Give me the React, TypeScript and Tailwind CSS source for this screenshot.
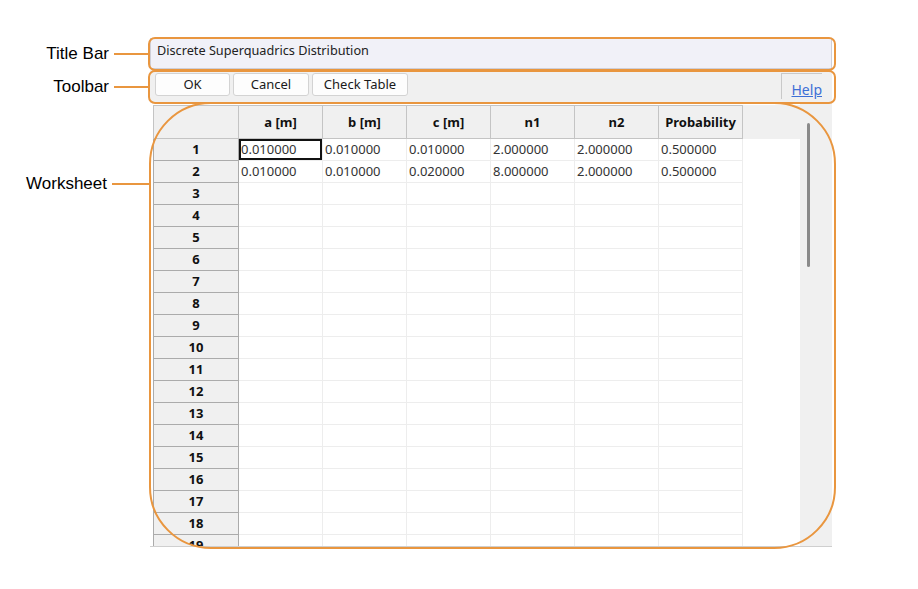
import React from 'react';

const ui = { fontFamily: '"Noto Sans", "Open Sans", sans-serif' };
const label = { fontFamily: '"Liberation Sans", Arial, sans-serif' };

const columns = ['a [m]', 'b [m]', 'c [m]', 'n1', 'n2', 'Probability'];

const data: string[][] = [
  ['0.010000', '0.010000', '0.010000', '2.000000', '2.000000', '0.500000'],
  ['0.010000', '0.010000', '0.020000', '8.000000', '2.000000', '0.500000'],
];

const rowCount = 19;

const Callout: React.FC<{ text: string; top: number; lineWidth: number }> = ({ text, top, lineWidth }) => (
  <div className="absolute right-0 flex items-center gap-[5px]" style={{ top }}>
    <span className="text-[17px] leading-none text-black" style={label}>
      {text}
    </span>
    <div className="h-[2px] bg-[#e9963f]" style={{ width: lineWidth }} />
  </div>
);

const ToolButton: React.FC<{ text: string; width: string }> = ({ text, width }) => (
  <button
    className={`${width} h-[23px] rounded-[3px] border border-[#d3d3d3] bg-[#fdfdfd] text-[13px] text-[#1a1a1a] flex items-center justify-center`}
    style={ui}
  >
    {text}
  </button>
);

const Worksheet: React.FC = () => {
  const rows = Array.from({ length: rowCount }, (_, i) => i + 1);
  return (
    <div className="flex h-[444px] border-b border-[#cfcfcf] bg-white">
      <div className="w-[650px] pl-[3px] pt-[2px] overflow-hidden" style={ui}>
        <div className="grid grid-cols-[86px_repeat(6,84px)_57px] auto-rows-[22px] [grid-template-rows:34px]">
          <div className="h-[34px] bg-[#f0f0f0] border border-[#c4c4c4]" />
          {columns.map((c) => (
            <div
              key={c}
              className="h-[34px] bg-[#f0f0f0] border-t border-r border-b border-[#c4c4c4] flex items-center justify-center pt-[1px] text-[13px] font-bold text-[#111]"
            >
              {c}
            </div>
          ))}
          <div className="h-[34px] bg-[#f0f0f0]" />
          {rows.map((r) => (
            <React.Fragment key={r}>
              <div className="h-[22px] bg-[#f0f0f0] border-l border-r border-b border-[#ababab] flex items-center justify-center pt-[1px] text-[13px] font-bold text-[#111]">
                {r}
              </div>
              {columns.map((c, ci) => {
                const v = data[r - 1]?.[ci];
                const selected = r === 1 && ci === 0;
                return (
                  <div
                    key={c}
                    className={`h-[22px] border-r border-b border-[#ededed] flex items-center pl-[2px] pt-[1px] text-[13px] text-[#333] ${
                      selected ? 'shadow-[inset_0_0_0_2px_#111]' : ''
                    }`}
                  >
                    {v}
                  </div>
                );
              })}
              <div className="h-[22px]" />
            </React.Fragment>
          ))}
        </div>
      </div>
      <div className="w-[32px] bg-[#f0f0f0] pt-[20px] pl-[7px]">
        <div className="w-[3px] h-[144px] rounded-full bg-[#8a8a8a]" />
      </div>
    </div>
  );
}

export default function App() {
  return (
    <div className="relative w-[918px] h-[589px] bg-white overflow-hidden flex">
      <div className="relative w-[150px] shrink-0">
        <Callout text="Title Bar" top={45} lineWidth={36} />
        <Callout text="Toolbar" top={78} lineWidth={36} />
        <Callout text="Worksheet" top={175} lineWidth={38} />
      </div>

      <div className="mt-[38px] w-[682px] flex flex-col">
        <div
          className="h-[31px] border border-[#cfcfd8] bg-[#f1f1f8] px-[6px] pt-[2px] text-[12.7px] text-[#222]"
          style={ui}
        >
          Discrete Superquadrics Distribution
        </div>
        <div className="h-[33px] mt-[1px] bg-[#f0f0f0] flex items-start pt-[3px] pl-[5px] pr-[10px] gap-[3px]">
          <ToolButton text="OK" width="w-[75px]" />
          <ToolButton text="Cancel" width="w-[76px]" />
          <ToolButton text="Check Table" width="w-[96px]" />
          <div className="ml-auto w-[41px] h-[26px] border-l border-t border-[#c9c9c9] flex items-end justify-end pb-[2px]">
            <span className="text-[14px] text-[#3d6fd6] underline leading-none" style={ui}>
              Help
            </span>
          </div>
        </div>
        <Worksheet />
      </div>

      {/* annotation outlines */}
      <div className="absolute left-[148px] top-[37px] w-[688px] h-[34px] rounded-[7px] border-2 border-[#e9963f] pointer-events-none" />
      <div className="absolute left-[148px] top-[70px] w-[688px] h-[34px] rounded-[7px] border-2 border-[#e9963f] pointer-events-none" />
      <div className="absolute left-[149px] top-[102px] w-[687px] h-[447px] rounded-[62px] border-2 border-[#e9963f] pointer-events-none" />
    </div>
  );
}
